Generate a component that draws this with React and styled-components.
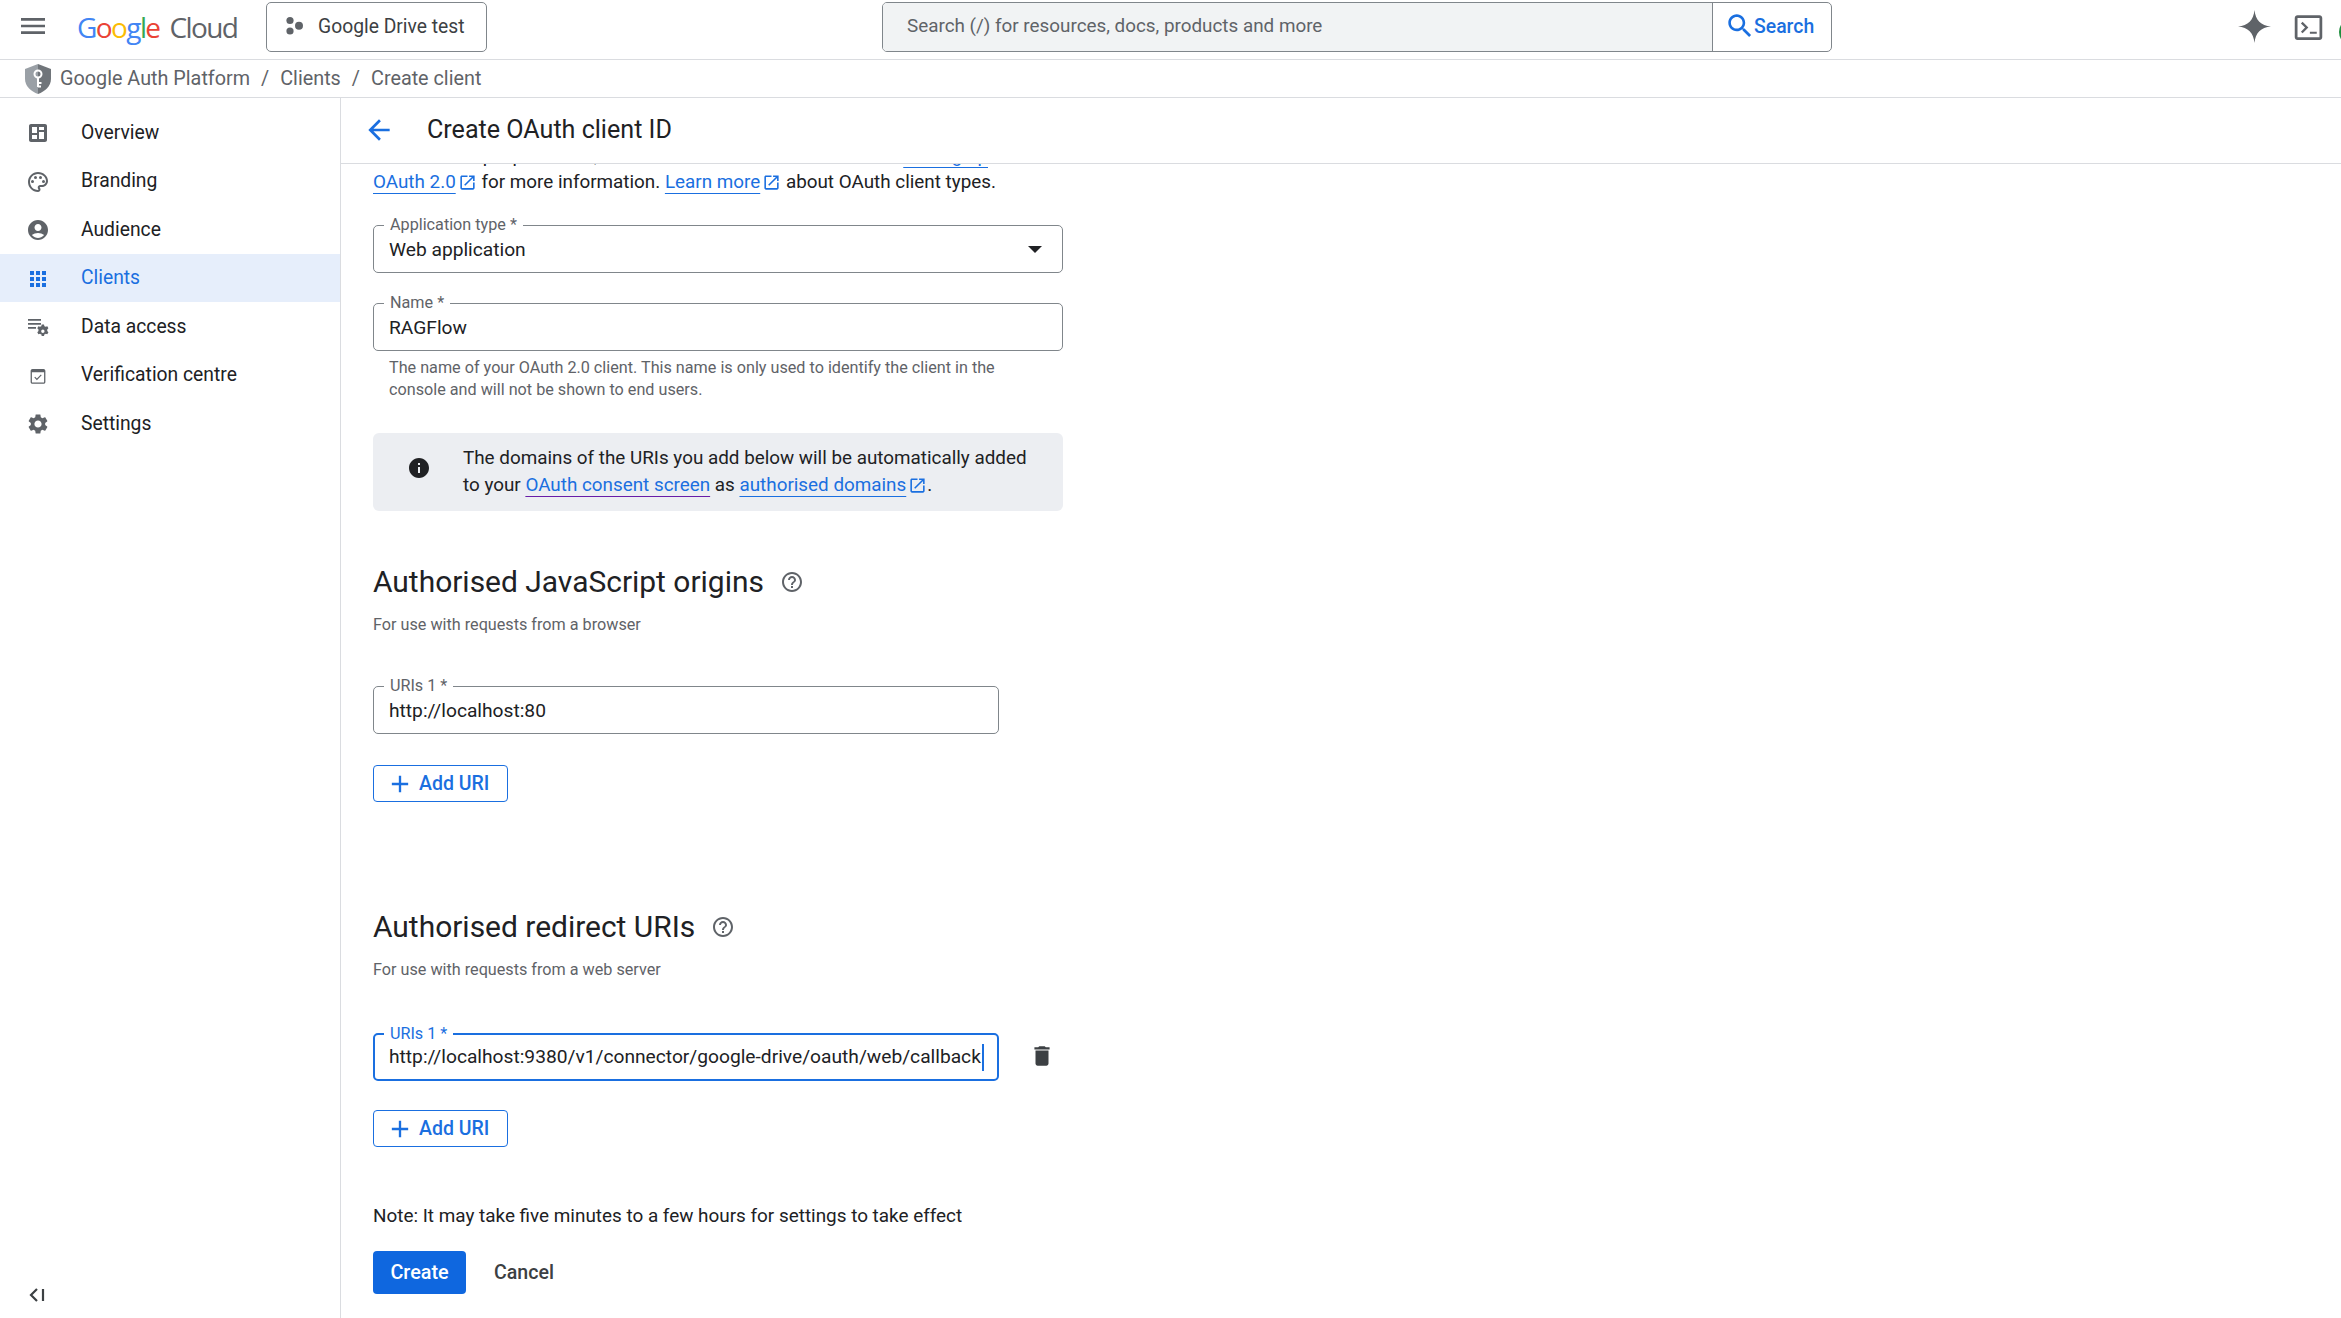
import React from "react";
import styled, { createGlobalStyle } from "styled-components";

const GlobalStyle = createGlobalStyle`
  html, body { margin: 0; padding: 0; background: #fff; }
  body { font-family: Roboto, "Liberation Sans", sans-serif; color: #202124; }
`;

const Page = styled.div`
  width: 2341px;
  height: 1318px;
  overflow: hidden;
  display: flex;
  flex-direction: column;
`;

const TopBar = styled.header`
  height: 60px;
  flex: none;
  box-sizing: border-box;
  border-bottom: 1px solid #dadce0;
  display: flex;
  align-items: flex-start;
  padding: 2px 0 0 21px;
  position: relative;
  overflow: hidden;
`;

const MenuIcon = styled.svg`
  width: 32px;
  height: 32px;
  margin: 8px 0 0 -4px;
  fill: #5f6368;
`;

const Logo = styled.div`
  margin: 3px 0 0 28px;
  width: 189px;
  height: 44px;
  display: flex;
  align-items: center;
  font-family: "Open Sans", Roboto, sans-serif;
  font-size: 28px;
  letter-spacing: -1.6px;
  white-space: nowrap;
`;

const LogoLetter = styled.span`
  color: ${(p) => p.$c};
`;

const LogoCloud = styled.span`
  color: #5f6368;
  margin-left: 10px;
  letter-spacing: -1.6px;
`;

const ProjectButton = styled.div`
  box-sizing: border-box;
  width: 221px;
  height: 50px;
  border: 1px solid #80868b;
  border-radius: 5px;
  display: flex;
  align-items: center;
  gap: 13px;
  padding: 0 0 2px 18px;
  font-size: 19.3px;
  color: #3c4043;
`;

const SearchWrap = styled.div`
  position: absolute;
  left: 882px;
  top: 2px;
  display: flex;
  height: 50px;
  box-sizing: border-box;
  width: 950px;
  border: 1px solid #80868b;
  border-radius: 5px;
  overflow: hidden;
`;

const SearchInput = styled.div`
  flex: 1;
  background: #f1f3f4;
  display: flex;
  align-items: center;
  padding: 0 0 2px 24px;
  font-size: 18.85px;
  color: #5f6368;
`;

const SearchBtn = styled.div`
  width: 119px;
  flex: none;
  border-left: 1px solid #80868b;
  display: flex;
  align-items: center;
  padding: 0 0 2px 14px;
  box-sizing: border-box;
  gap: 1px;
  color: #1a6fe0;
  font-size: 19.4px;
  font-weight: 500;
`;

const SearchIcon = styled.svg`
  width: 26px;
  height: 26px;
  fill: #1a6fe0;
`;

const TopIcon = styled.svg`
  position: absolute;
  fill: #5f6368;
  left: ${(p) => p.$x}px;
  top: ${(p) => p.$y}px;
  width: ${(p) => p.$s}px;
  height: ${(p) => p.$s}px;
`;

const AvatarEdge = styled.div`
  position: absolute;
  left: 2339px;
  top: 18px;
  width: 24px;
  height: 24px;
  border-radius: 50%;
  border: 2px solid #1e8e3e;
`;

const Crumbs = styled.nav`
  height: 38px;
  flex: none;
  box-sizing: border-box;
  border-bottom: 1px solid #dadce0;
  display: flex;
  align-items: center;
  padding-left: 25px;
  font-size: 19.8px;
  color: #5f6368;
`;

const ShieldIcon = styled.svg`
  width: 26px;
  height: 30px;
  margin-right: 9px;
`;

const Slash = styled.span`
  margin: 0 11px;
`;

const Body = styled.div`
  flex: 1;
  display: flex;
  min-height: 0;
`;

const Sidebar = styled.aside`
  width: 341px;
  flex: none;
  box-sizing: border-box;
  border-right: 1px solid #dadce0;
  display: flex;
  flex-direction: column;
  padding-top: 10px;
`;

const NavItem = styled.div`
  height: 48.5px;
  display: flex;
  align-items: center;
  padding-left: 26px;
  gap: 31px;
  font-size: 19.3px;
  color: ${(p) => (p.$active ? "#1a6fe0" : "#202124")};
  background: ${(p) => (p.$active ? "#e6eefb" : "transparent")};
`;

const NavIcon = styled.svg`
  width: 24px;
  height: 24px;
  flex: none;
  margin-top: 2px;
  fill: ${(p) => (p.$active ? "#1a6fe0" : "#5f6368")};
`;

const Collapse = styled.div`
  margin-top: auto;
  padding: 0 0 11px 28px;
  height: 24px;
  display: flex;
  align-items: center;
`;

const CollapseIcon = styled.svg`
  width: 18px;
  height: 18px;
  fill: none;
  stroke: #3c4043;
  stroke-width: 2.2;
`;

const Main = styled.main`
  flex: 1;
  min-width: 0;
  display: flex;
  flex-direction: column;
`;

const Header = styled.div`
  height: 66px;
  flex: none;
  box-sizing: border-box;
  border-bottom: 1px solid #dadce0;
  display: flex;
  align-items: center;
  padding: 0 0 2px 22px;
  gap: 32px;
  font-size: 25.1px;
`;

const BackIcon = styled.svg`
  width: 32px;
  height: 32px;
  fill: #1a6fe0;
`;

const Scroll = styled.div`
  flex: 1;
  min-height: 0;
  overflow: hidden;
  padding-left: 32px;
`;

const Form = styled.div`
  width: 690px;
  margin-top: -21px;
`;

const Intro = styled.p`
  margin: 0;
  font-size: 18.85px;
  line-height: 26px;
  white-space: nowrap;
`;

const TextLink = styled.a`
  color: #1a6fe0;
  text-decoration: underline;
  text-decoration-color: ${(p) => (p.$visited ? "#681da8" : "#1a6fe0")};
  text-underline-offset: 5px;
  text-decoration-thickness: 1px;
`;

const ExtIcon = styled.svg`
  width: 19px;
  height: 19px;
  margin-left: 2px;
  vertical-align: -4px;
  fill: #1a6fe0;
`;

const Field = styled.div`
  position: relative;
  box-sizing: border-box;
  width: ${(p) => p.$w || 690}px;
  height: 48px;
  border: ${(p) => (p.$focus ? "2px solid #1a6fe0" : "1px solid #80868b")};
  border-radius: 5px;
  display: flex;
  align-items: center;
  justify-content: space-between;
  padding: 0 ${(p) => (p.$focus ? 14 : 15)}px 0;
  margin-top: ${(p) => p.$mt || 0}px;
  font-size: 19.2px;
  color: #202124;
  white-space: nowrap;
`;

const FloatLabel = styled.label`
  position: absolute;
  left: ${(p) => (p.$focus ? 9 : 10)}px;
  top: -10px;
  padding: 0 6px;
  background: #fff;
  font-size: 16.2px;
  line-height: 18px;
  color: ${(p) => (p.$focus ? "#1a6fe0" : "#5f6368")};
`;

const Caret = styled.span`
  display: inline-block;
  width: 2px;
  height: 27px;
  background: #1a6fe0;
  margin-left: 1px;
  vertical-align: middle;
`;

const ArrowDown = styled.span`
  width: 0;
  height: 0;
  border-left: 7px solid transparent;
  border-right: 7px solid transparent;
  border-top: 7px solid #202124;
  margin-right: 5px;
`;

const Hint = styled.div`
  padding: 6px 0 0 16px;
  font-size: 16.2px;
  line-height: 22px;
  color: #5f6368;
`;

const InfoBox = styled.div`
  margin-top: 32px;
  height: 78px;
  background: #eceef2;
  border-radius: 6px;
  display: flex;
  align-items: center;
  padding-left: 34px;
  gap: 32px;
  font-size: 18.85px;
  line-height: 27px;
`;

const InfoIcon = styled.svg`
  width: 24px;
  height: 24px;
  flex: none;
  fill: #202124;
  margin-top: -8px;
`;

const SectionTitle = styled.h2`
  margin: ${(p) => p.$mt}px 0 0;
  font-size: 29.95px;
  line-height: 40px;
  font-weight: 400;
  display: flex;
  align-items: center;
  gap: 16px;
`;

const HelpIcon = styled.svg`
  width: 24px;
  height: 24px;
  fill: #5f6368;
`;

const SectionSub = styled.div`
  margin-top: 12px;
  font-size: 16.2px;
  line-height: 22px;
  color: #5f6368;
`;

const UriRow = styled.div`
  display: flex;
  align-items: flex-start;
  margin-top: ${(p) => p.$mt}px;
`;

const TrashIcon = styled.svg`
  width: 26px;
  height: 26px;
  margin: 10px 0 0 30px;
  fill: #3c4043;
`;

const AddButton = styled.button`
  box-sizing: border-box;
  margin-top: ${(p) => p.$mt}px;
  width: 135px;
  height: 37px;
  background: #fff;
  border: 1px solid #1a6fe0;
  border-radius: 4px;
  display: flex;
  align-items: center;
  padding: 0 0 0 17px;
  gap: 5px;
  font-family: inherit;
  font-size: 19.5px;
  font-weight: 500;
  color: #1a6fe0;
`;

const PlusIcon = styled.svg`
  width: 28px;
  height: 28px;
  margin-left: -5px;
  fill: #1a6fe0;
`;

const Note = styled.div`
  margin-top: 56px;
  font-size: 18.9px;
  line-height: 26px;
  white-space: nowrap;
`;

const Actions = styled.div`
  margin-top: 22px;
  display: flex;
  align-items: center;
  gap: 28px;
`;

const PrimaryButton = styled.button`
  width: 93px;
  height: 43px;
  border: 0;
  border-radius: 4px;
  background: #0f67df;
  color: #fff;
  font-family: inherit;
  font-size: 19.8px;
  font-weight: 500;
`;

const GhostButton = styled.span`
  font-size: 19.6px;
  font-weight: 500;
  color: #3c4043;
`;

const paths = {
  menu: "M3 18h18v-2H3v2zm0-5h18v-2H3v2zm0-7v2h18V6H3z",
  arrow: "M20 11H7.83l5.59-5.59L12 4l-8 8 8 8 1.41-1.41L7.83 13H20v-2z",
  search:
    "M15.5 14h-.79l-.28-.27C15.41 12.59 16 11.11 16 9.5 16 5.91 13.09 3 9.5 3S3 5.91 3 9.5 5.91 16 9.5 16c1.61 0 3.09-.59 4.23-1.57l.27.28v.79l5 4.99L20.49 19l-4.99-5zm-6 0C7.01 14 5 11.99 5 9.5S7.01 5 9.5 5 14 7.01 14 9.5 11.99 14 9.5 14z",
  spark: "M12 0C12.7 7.4 16.6 11.3 24 12 16.6 12.7 12.7 16.6 12 24 11.3 16.6 7.4 12.7 0 12 7.4 11.3 11.3 7.4 12 0z",
  terminal:
    "M20 3H4c-1.1 0-2 .9-2 2v14c0 1.1.9 2 2 2h16c1.1 0 2-.9 2-2V5c0-1.1-.9-2-2-2zm0 16H4V5h16v14zM6.5 9l1.2-1.2 4.2 4.2-4.2 4.2-1.2-1.2 3-3-3-3zM13 15h5v1.6h-5z",
  dashboard:
    "M19 3H5c-1.1 0-2 .9-2 2v14c0 1.1.9 2 2 2h14c1.1 0 2-.9 2-2V5c0-1.1-.9-2-2-2zM6 6h5v6H6V6zm0 8h5v4H6v-4zm12 4h-5v-7h5v7zm0-9h-5V6h5v3z",
  palette:
    "M12 22C6.49 22 2 17.51 2 12S6.49 2 12 2s10 4.04 10 9c0 3.31-2.69 6-6 6h-1.77c-.28 0-.5.22-.5.5 0 .12.05.23.13.33.41.47.64 1.06.64 1.67 0 1.38-1.12 2.5-2.5 2.5zm0-18c-4.41 0-8 3.59-8 8s3.59 8 8 8c.28 0 .5-.22.5-.5 0-.16-.08-.28-.14-.35-.41-.46-.63-1.05-.63-1.65 0-1.38 1.12-2.5 2.5-2.5H16c2.21 0 4-1.79 4-4 0-3.86-3.59-7-8-7zM6.5 10a1.5 1.5 0 1 1 0 3 1.5 1.5 0 0 1 0-3zm3-4a1.5 1.5 0 1 1 0 3 1.5 1.5 0 0 1 0-3zm5 0a1.5 1.5 0 1 1 0 3 1.5 1.5 0 0 1 0-3zm3 4a1.5 1.5 0 1 1 0 3 1.5 1.5 0 0 1 0-3z",
  account:
    "M12 2C6.48 2 2 6.48 2 12s4.48 10 10 10 10-4.48 10-10S17.52 2 12 2zm0 4c1.93 0 3.5 1.57 3.5 3.5S13.93 13 12 13s-3.5-1.57-3.5-3.5S10.07 6 12 6zm0 14c-2.03 0-4.43-.82-6.14-2.88C7.55 15.8 9.68 15 12 15s4.45.8 6.14 2.12C16.43 19.18 14.03 20 12 20z",
  apps: "M4 8h4V4H4v4zm6 12h4v-4h-4v4zm-6 0h4v-4H4v4zm0-6h4v-4H4v4zm6 0h4v-4h-4v4zm6-10v4h4V4h-4zm-6 4h4V4h-4v4zm6 6h4v-4h-4v4zm0 6h4v-4h-4v4z",
  dataAccess:
    "M2 4h13v1.8H2zM2 8h13v1.8H2zM2 12h8v1.8H2zM18 9.500l.4 1.700c.5.1.9.3 1.300.6l1.600-.5 1.100 2-1.200 1.200c.1.5.1 1 0 1.500l1.200 1.200-1.100 2-1.600-.5c-.4.3-.8.5-1.300.6l-.4 1.700h-2.300l-.4-1.700c-.5-.1-.9-.3-1.300-.6l-1.600.5-1.100-2 1.200-1.200c-.1-.5-.1-1 0-1.500l-1.200-1.200 1.100-2 1.600.5c.4-.3.8-.5 1.300-.6l.4-1.700zm-1.150 5a1.700 1.700 0 1 0 0 3.400 1.700 1.700 0 0 0 0-3.400z",
  verified:
    "M18 4H6c-1.100 0-2 .9-2 2v12c0 1.100.9 2 2 2h12c1.100 0 2-.9 2-2V6c0-1.100-.9-2-2-2zm.6 14c0 .3-.3.6-.6.6H6c-.3 0-.6-.3-.6-.6V7.500h13.200V18zM16 10.800l-5.200 5.200L8 13.200l.9-.9 1.900 1.900 4.300-4.300z",
  settings:
    "M19.14 12.94c.04-.3.06-.61.06-.94 0-.32-.02-.64-.07-.94l2.03-1.58c.18-.14.23-.41.12-.61l-1.92-3.32c-.12-.22-.37-.29-.59-.22l-2.39.96c-.5-.38-1.03-.7-1.62-.94l-.36-2.54c-.04-.24-.24-.41-.48-.41h-3.84c-.24 0-.43.17-.47.41l-.36 2.54c-.59.24-1.13.57-1.62.94l-2.39-.96c-.22-.08-.47 0-.59.22L2.74 8.87c-.12.21-.08.47.12.61l2.03 1.58c-.05.3-.09.63-.09.94s.02.64.07.94l-2.03 1.58c-.18.14-.23.41-.12.61l1.92 3.32c.12.22.37.29.59.22l2.39-.96c.5.38 1.03.7 1.62.94l.36 2.54c.05.24.24.41.48.41h3.84c.24 0 .44-.17.47-.41l.36-2.54c.59-.24 1.13-.56 1.62-.94l2.39.96c.22.08.47 0 .59-.22l1.92-3.32c.12-.22.07-.47-.12-.61l-2.01-1.58zM12 15.6c-1.98 0-3.6-1.62-3.6-3.6s1.62-3.6 3.6-3.6 3.6 1.62 3.6 3.6-1.62 3.6-3.6 3.6z",
  help: "M11 18h2v-2h-2v2zm1-16C6.48 2 2 6.48 2 12s4.48 10 10 10 10-4.48 10-10S17.52 2 12 2zm0 18c-4.41 0-8-3.59-8-8s3.59-8 8-8 8 3.59 8 8-3.59 8-8 8zm0-14c-2.21 0-4 1.79-4 4h2c0-1.1.9-2 2-2s2 .9 2 2c0 2-3 1.75-3 5h2c0-2.25 3-2.5 3-5 0-2.21-1.79-4-4-4z",
  ext: "M19 19H5V5h7V3H5c-1.11 0-2 .9-2 2v14c0 1.1.89 2 2 2h14c1.1 0 2-.9 2-2v-7h-2v7zM14 3v2h3.59l-9.83 9.83 1.41 1.41L19 6.41V10h2V3h-7z",
  info: "M12 2C6.48 2 2 6.48 2 12s4.48 10 10 10 10-4.48 10-10S17.52 2 12 2zm1 15h-2v-6h2v6zm0-8h-2V7h2v2z",
  trash: "M6 19c0 1.1.9 2 2 2h8c1.1 0 2-.9 2-2V7H6v12zM19 4h-3.5l-1-1h-5l-1 1H5v2h14V4z",
  plus: "M19 13h-6v6h-2v-6H5v-2h6V5h2v6h6v2z",
};

const navItems = [
  ["Overview", paths.dashboard, "0 0 24 24"],
  ["Branding", paths.palette, "0 0 24 24"],
  ["Audience", paths.account, "0 0 24 24"],
  ["Clients", paths.apps, "0 0 24 24", true],
  ["Data access", paths.dataAccess, "0 0 24 24"],
  ["Verification centre", paths.verified, "-1 -1.500 26 26"],
  ["Settings", paths.settings, "0 0 24 24"],
];

const logoLetters = [
  ["G", "#4285f4"],
  ["o", "#ea4335"],
  ["o", "#fbbc04"],
  ["g", "#4285f4"],
  ["l", "#34a853"],
  ["e", "#ea4335"],
];

const External = () => (
  <ExtIcon viewBox="0 0 24 24">
    <path d={paths.ext} />
  </ExtIcon>
);

const AddUri = ({ mt }) => (
  <AddButton $mt={mt}>
    <PlusIcon viewBox="0 0 24 24">
      <path d={paths.plus} />
    </PlusIcon>
    Add URI
  </AddButton>
);

const Help = () => (
  <HelpIcon viewBox="0 0 24 24">
    <path d={paths.help} />
  </HelpIcon>
);

const App = () => {
  return (
    <Page>
      <GlobalStyle />
      <TopBar>
        <MenuIcon viewBox="0 0 24 24">
          <path d={paths.menu} />
        </MenuIcon>
        <Logo>
          {logoLetters.map(([l, c], i) => (
            <LogoLetter key={i} $c={c}>
              {l}
            </LogoLetter>
          ))}
          <LogoCloud>Cloud</LogoCloud>
        </Logo>
        <ProjectButton>
          <svg width="20" height="20" viewBox="0 0 20 20" fill="#5f6368">
            <circle cx="5" cy="4.500" r="3.600" />
            <circle cx="5" cy="15" r="3.600" />
            <circle cx="14" cy="9.800" r="4" />
          </svg>
          Google Drive test
        </ProjectButton>
        <SearchWrap>
          <SearchInput>Search (/) for resources, docs, products and more</SearchInput>
          <SearchBtn>
            <SearchIcon viewBox="2 2 20 20">
              <path d={paths.search} />
            </SearchIcon>
            Search
          </SearchBtn>
        </SearchWrap>
        <TopIcon viewBox="0 0 24 24" $x={2238} $y={10} $s={33}>
          <path d={paths.spark} />
        </TopIcon>
        <TopIcon viewBox="0 0 24 24" $x={2292} $y={11} $s={33}>
          <path d={paths.terminal} />
        </TopIcon>
        <AvatarEdge />
      </TopBar>
      <Crumbs>
        <ShieldIcon viewBox="0 0 26 30">
          <defs>
            <linearGradient id="shield" x1="0" y1="0" x2="1" y2="0">
              <stop offset="0" stopColor="#9aa0a6" />
              <stop offset="0.5" stopColor="#9aa0a6" />
              <stop offset="0.5" stopColor="#70757a" />
              <stop offset="1" stopColor="#70757a" />
            </linearGradient>
          </defs>
          <path d="M13 0 L26 5 V15 C26 22 20 27.500 13 30 C6 27.500 0 22 0 15 V5 Z" fill="url(#shield)" />
          <circle cx="13" cy="10" r="3.500" fill="none" stroke="#fff" strokeWidth="2" />
          <path d="M13 13 V23 M13 19 H16.500 M13 22.500 H16" stroke="#fff" strokeWidth="2" fill="none" />
        </ShieldIcon>
        Google Auth Platform
        <Slash>/</Slash>
        Clients
        <Slash>/</Slash>
        Create client
      </Crumbs>
      <Body>
        <Sidebar>
          {navItems.map(([label, d, box, active]) => (
            <NavItem key={label} $active={active}>
              <NavIcon viewBox={box} $active={active}>
                <path d={d} />
              </NavIcon>
              {label}
            </NavItem>
          ))}
          <Collapse>
            <CollapseIcon viewBox="0 0 18 18">
              <path d="M9 3 L3 9 L9 15 M15 3 V15" />
            </CollapseIcon>
          </Collapse>
        </Sidebar>
        <Main>
          <Header>
            <BackIcon viewBox="0 0 24 24">
              <path d={paths.arrow} />
            </BackIcon>
            Create OAuth client ID
          </Header>
          <Scroll>
            <Form>
              <Intro>
                runs on multiple platforms, each will need its own client ID. See <TextLink>Setting up</TextLink>
                <br />
                <TextLink>OAuth 2.0</TextLink>
                <External /> for more information. <TextLink>Learn more</TextLink>
                <External /> about OAuth client types.
              </Intro>
              <Field $mt={30}>
                <FloatLabel>Application type *</FloatLabel>
                Web application
                <ArrowDown />
              </Field>
              <Field $mt={30}>
                <FloatLabel>Name *</FloatLabel>
                RAGFlow
              </Field>
              <Hint>
                The name of your OAuth 2.0 client. This name is only used to identify the client in the
                <br />
                console and will not be shown to end users.
              </Hint>
              <InfoBox>
                <InfoIcon viewBox="0 0 24 24">
                  <path d={paths.info} />
                </InfoIcon>
                <div>
                  The domains of the URIs you add below will be automatically added
                  <br />
                  to your <TextLink $visited>OAuth consent screen</TextLink> as{" "}
                  <TextLink>authorised domains</TextLink>
                  <External />.
                </div>
              </InfoBox>
              <SectionTitle $mt={51}>
                Authorised JavaScript origins
                <Help />
              </SectionTitle>
              <SectionSub>For use with requests from a browser</SectionSub>
              <UriRow $mt={50}>
                <Field $w={626}>
                  <FloatLabel>URIs 1 *</FloatLabel>
                  http://localhost:80
                </Field>
              </UriRow>
              <AddUri mt={31} />
              <SectionTitle $mt={105}>
                Authorised redirect URIs
                <Help />
              </SectionTitle>
              <SectionSub>For use with requests from a web server</SectionSub>
              <UriRow $mt={52}>
                <Field $w={626} $focus>
                  <FloatLabel $focus>URIs 1 *</FloatLabel>
                  <span>
                    http://localhost:9380/v1/connector/google-drive/oauth/web/callback
                    <Caret />
                  </span>
                </Field>
                <TrashIcon viewBox="0 0 24 24">
                  <path d={paths.trash} />
                </TrashIcon>
              </UriRow>
              <AddUri mt={29} />
              <Note>Note: It may take five minutes to a few hours for settings to take effect</Note>
              <Actions>
                <PrimaryButton>Create</PrimaryButton>
                <GhostButton>Cancel</GhostButton>
              </Actions>
            </Form>
          </Scroll>
        </Main>
      </Body>
    </Page>
  );
};

export default App;
